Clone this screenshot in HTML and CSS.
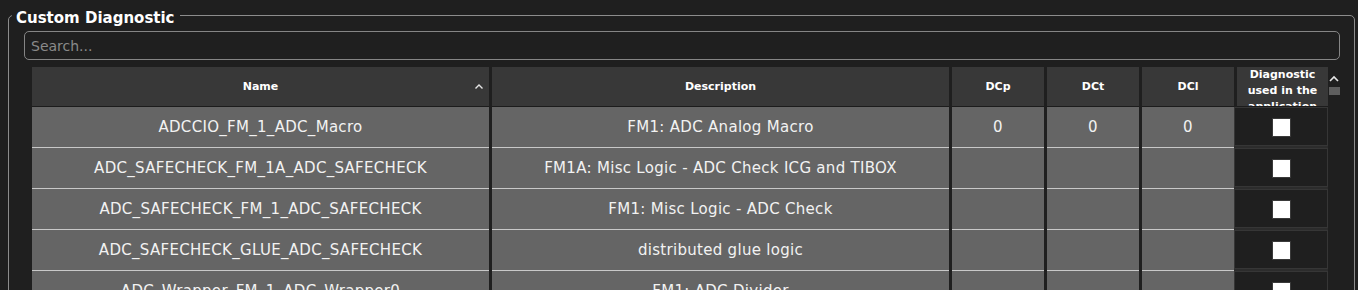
FILE: index.html
```html
<!DOCTYPE html>
<html lang="en">

<head>
    <meta charset="UTF-8">
    <title>Custom Diagnostic</title>
    <link rel="stylesheet" href="styles.css">
</head>

<body>

    <fieldset class="panel">
        <legend>Custom Diagnostic</legend>

        <div class="panel-body">
            <input type="text" class="search" placeholder="Search...">

            <div class="grid-wrap">
                <table class="grid">
                    <colgroup>
                        <col class="col-name">
                        <col class="col-desc">
                        <col class="col-dc">
                        <col class="col-dc">
                        <col class="col-dc">
                        <col class="col-used">
                    </colgroup>
                    <thead>
                        <tr>
                            <th class="sortable">
                                Name
                                <svg class="sort-icon" width="8" height="5" viewBox="0 0 8 5">
                                    <polyline points="0.5,4.5 4,1 7.5,4.5" fill="none" stroke="#e6e6e6" stroke-width="1.4" />
                                </svg>
                            </th>
                            <th>Description</th>
                            <th>DCp</th>
                            <th>DCt</th>
                            <th>DCl</th>
                            <th class="th-used"><div class="wrap-head">Diagnostic used in the application</div></th>
                        </tr>
                    </thead>
                    <tbody>
                        <tr>
                            <td>ADCCIO_FM_1_ADC_Macro</td>
                            <td>FM1: ADC Analog Macro</td>
                            <td>0</td>
                            <td>0</td>
                            <td>0</td>
                            <td class="td-used"><span class="check"></span></td>
                        </tr>
                        <tr>
                            <td>ADC_SAFECHECK_FM_1A_ADC_SAFECHECK</td>
                            <td>FM1A: Misc Logic - ADC Check ICG and TIBOX</td>
                            <td></td>
                            <td></td>
                            <td></td>
                            <td class="td-used"><span class="check"></span></td>
                        </tr>
                        <tr>
                            <td>ADC_SAFECHECK_FM_1_ADC_SAFECHECK</td>
                            <td>FM1: Misc Logic - ADC Check</td>
                            <td></td>
                            <td></td>
                            <td></td>
                            <td class="td-used"><span class="check"></span></td>
                        </tr>
                        <tr>
                            <td>ADC_SAFECHECK_GLUE_ADC_SAFECHECK</td>
                            <td>distributed glue logic</td>
                            <td></td>
                            <td></td>
                            <td></td>
                            <td class="td-used"><span class="check"></span></td>
                        </tr>
                        <tr>
                            <td>ADC_Wrapper_FM_1_ADC_Wrapper0</td>
                            <td>FM1: ADC Divider</td>
                            <td></td>
                            <td></td>
                            <td></td>
                            <td class="td-used"><span class="check"></span></td>
                        </tr>
                    </tbody>
                </table>

                <div class="scrollbar">
                    <svg class="scroll-up" width="10" height="7" viewBox="0 0 10 7">
                        <polyline points="1,6 5,2 9,6" fill="none" stroke="#e6e6e6" stroke-width="1.6" />
                    </svg>
                    <div class="scroll-thumb"></div>
                </div>
            </div>
        </div>
    </fieldset>

</body>

</html>
```

FILE: styles.css
```css
* {
    box-sizing: border-box;
}

body {
    margin: 0;
    padding-top: 3px;
    background: #1f1f1f;
    font-family: 'DejaVu Sans', Verdana, sans-serif;
    color: #f0f0f0;
    overflow: hidden;
}

.panel {
    margin: 0 3px 0 8px;
    padding: 0;
    border: 1px solid #8c8c8c;
    border-radius: 5px;
    min-width: 0;
}

.panel legend {
    margin-left: 3px;
    padding: 6px 5px 0 4px;
    font-size: 15px;
    line-height: 18px;
    font-weight: bold;
    color: #ffffff;
}

.panel-body {
    padding: 4px 14px 0 15px;
}

.search {
    display: block;
    width: 100%;
    height: 29px;
    padding: 0 6px;
    background: transparent;
    border: 1px solid #858585;
    border-radius: 5px;
    font-family: inherit;
    font-size: 14px;
    color: #e0e0e0;
    outline: none;
}

.search::placeholder {
    color: #8a8a8a;
}

.grid-wrap {
    display: flex;
    margin-top: 7px;
    margin-left: 5px;
}

/* tableau */

.grid {
    table-layout: fixed;
    border-collapse: separate;
    border-spacing: 3px 0;
    width: 1302px;
}

.col-name,
.col-desc {
    width: 457px;
}

.col-dc {
    width: 92px;
}

.col-used {
    width: 91px;
}

.grid th {
    height: 40px;
    padding: 0 4px;
    background: #383838;
    border-bottom: 1px solid #1c1c1c;
    font-size: 11px;
    font-weight: bold;
    color: #ffffff;
    text-align: center;
}

.sortable {
    position: relative;
}

.sort-icon {
    position: absolute;
    right: 6px;
    top: 17px;
}

.th-used {
    vertical-align: top;
    padding: 0;
}

.wrap-head {
    height: 39px;
    overflow: hidden;
    line-height: 16px;
}

.grid td {
    height: 41px;
    padding: 0 4px;
    background: #656565;
    border-bottom: 1px solid #c8c8c8;
    font-size: 15px;
    letter-spacing: 0.3px;
    color: #f2f2f2;
    text-align: center;
    white-space: nowrap;
    overflow: hidden;
}

/* la dernière colonne déborde sur l'espacement à gauche */
.grid td.td-used {
    position: relative;
    overflow: visible;
    background: transparent;
    border-bottom: none;
}

.grid td.td-used::before {
    content: '';
    position: absolute;
    top: 0;
    bottom: 2px;
    left: -3px;
    right: 0;
    background: #1f1f1f;
    border: 1px solid #363636;
    box-shadow: 0 2px 0 #2c2c2c;
}

.check {
    position: relative;
    display: inline-block;
    width: 19px;
    height: 19px;
    margin-left: -3px;
    background: #ffffff;
    border: 1px solid #3a3a3a;
    vertical-align: middle;
}

/* barre de défilement */

.scrollbar {
    width: 12px;
    margin-left: -3px;
    display: flex;
    flex-direction: column;
    align-items: center;
    padding-top: 8px;
}

.scroll-up {
    display: block;
}

.scroll-thumb {
    width: 11px;
    height: 8px;
    margin-top: 5px;
    background: #5e5e5e;
}
```
